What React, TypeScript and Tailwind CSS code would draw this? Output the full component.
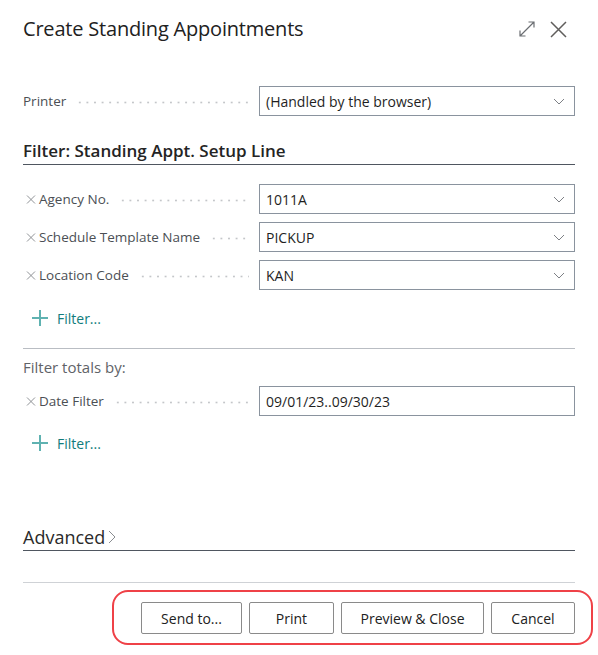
import React from 'react';

const font = { fontFamily: '"Segoe UI", "Open Sans", "Noto Sans", sans-serif' };

function Chevron() {
  return (
    <svg width="12" height="7" viewBox="0 0 12 7" className="shrink-0">
      <path d="M1 1l5 5 5-5" fill="none" stroke="#7d8085" strokeWidth="1" />
    </svg>
  );
}

function Leader() {
  return (
    <div className="flex-1 h-[3px] mt-[3px] mx-[10px] bg-[radial-gradient(circle,#c4c6c9_0.9px,transparent_1.2px)] bg-size-[7.6px_3px] bg-repeat-x" />
  );
}

function FieldRow({
  label,
  value,
  removable,
  dropdown = true,
}: {
  label: string;
  value: string;
  removable?: boolean;
  dropdown?: boolean;
}) {
  return (
    <div className="flex items-center h-[30px]">
      <div className="w-[236px] flex items-center h-full">
        {removable && (
          <svg width="16" height="9" viewBox="0 0 16 9" className="shrink-0">
            <path d="M4 0.5l8 8M12 0.5l-8 8" fill="none" stroke="#8f9296" strokeWidth="1" />
          </svg>
        )}
        <span className="text-[13.5px] text-[#4b4f54] whitespace-nowrap">{label}</span>
        <Leader />
      </div>
      <div className="flex-1 h-full border border-[#8a939e] flex items-center justify-between pl-[6px] pr-[9px] bg-white">
        <span className="text-[14px] text-[#1f1f1f]">{value}</span>
        {dropdown && <Chevron />}
      </div>
    </div>
  );
}

function AddFilter() {
  return (
    <div className="flex items-center h-[30px] pl-[9px] gap-[9px]">
      <svg width="16" height="16" viewBox="0 0 16 16">
        <path d="M8 0v16M0 8h16" stroke="#5fb2b1" strokeWidth="2" />
      </svg>
      <span className="text-[14px] text-[#117c7c]">Filter...</span>
    </div>
  );
}

export default function App() {
  return (
    <div className="w-[598px] h-[655px] bg-white overflow-hidden" style={font}>
      {/* Header */}
      <div className="h-[58px] flex items-center justify-between pl-[23px] pr-[31px]">
        <h1 className="text-[20px] text-[#212121] tracking-[-0.2px]">Create Standing Appointments</h1>
        <div className="flex items-center gap-[15px]">
          <svg width="16" height="16" viewBox="0 0 16 16">
            <path d="M1 15L15 1M9.5 1H15v5.5M1 9.5V15h5.5" fill="none" stroke="#6b6e72" strokeWidth="1.2" />
          </svg>
          <svg width="17" height="17" viewBox="0 0 17 17">
            <path d="M1 1l15 15M16 1L1 16" fill="none" stroke="#605e5c" strokeWidth="1.5" />
          </svg>
        </div>
      </div>

      <div className="px-[23px]">
        <div className="mt-[28px]">
          <FieldRow label="Printer" value="(Handled by the browser)" />
        </div>

        <div className="mt-[22px] h-[27px] border-b border-[#4f5660] flex items-center">
          <h2 className="text-[17px] font-semibold text-[#242424] leading-none pb-[1px]">
            Filter: Standing Appt. Setup Line
          </h2>
        </div>

        <div className="mt-[19px] flex flex-col gap-[8px]">
          <FieldRow removable label="Agency No." value="1011A" />
          <FieldRow removable label="Schedule Template Name" value="PICKUP" />
          <FieldRow removable label="Location Code" value="KAN" />
        </div>

        <div className="mt-[13px]">
          <AddFilter />
        </div>

        <div className="mt-[15px] border-t border-[#b9bdc3]" />

        <div className="mt-[6px] h-[24px] flex items-center text-[15px] text-[#5f6368]">Filter totals by:</div>

        <div className="mt-[7px]">
          <FieldRow removable label="Date Filter" value="09/01/23..09/30/23" dropdown={false} />
        </div>

        <div className="mt-[12px]">
          <AddFilter />
        </div>

        <div className="mt-[66px] h-[27px] border-b border-[#4f5660] flex items-center gap-[3px]">
          <span className="text-[18px] text-[#2a2a2a] leading-none">Advanced</span>
          <svg width="8" height="14" viewBox="0 0 8 14">
            <path d="M1 1l6 6-6 6" fill="none" stroke="#8a8d91" strokeWidth="1" />
          </svg>
        </div>

        <div className="mt-[31px] border-t border-[#cfd2d6]" />
      </div>

      {/* Footer actions */}
      <div className="mt-[7px] flex justify-end pr-[5px]">
        <div className="border-2 border-[#ef4147] rounded-[16px] pl-[27px] pr-[16px] pt-[10px] pb-[9px] flex gap-[7px]">
          {[
            ['Send to...', 'w-[101px]'],
            ['Print', 'w-[85px]'],
            ['Preview & Close', 'w-[143px]'],
            ['Cancel', 'w-[84px]'],
          ].map(([t, w]) => (
            <button
              key={t}
              className={`${w} h-[32px] border border-[#8a8a8a] rounded-[2px] bg-white text-[14px] text-[#212121]`}
            >
              {t}
            </button>
          ))}
        </div>
      </div>
    </div>
  );
}
